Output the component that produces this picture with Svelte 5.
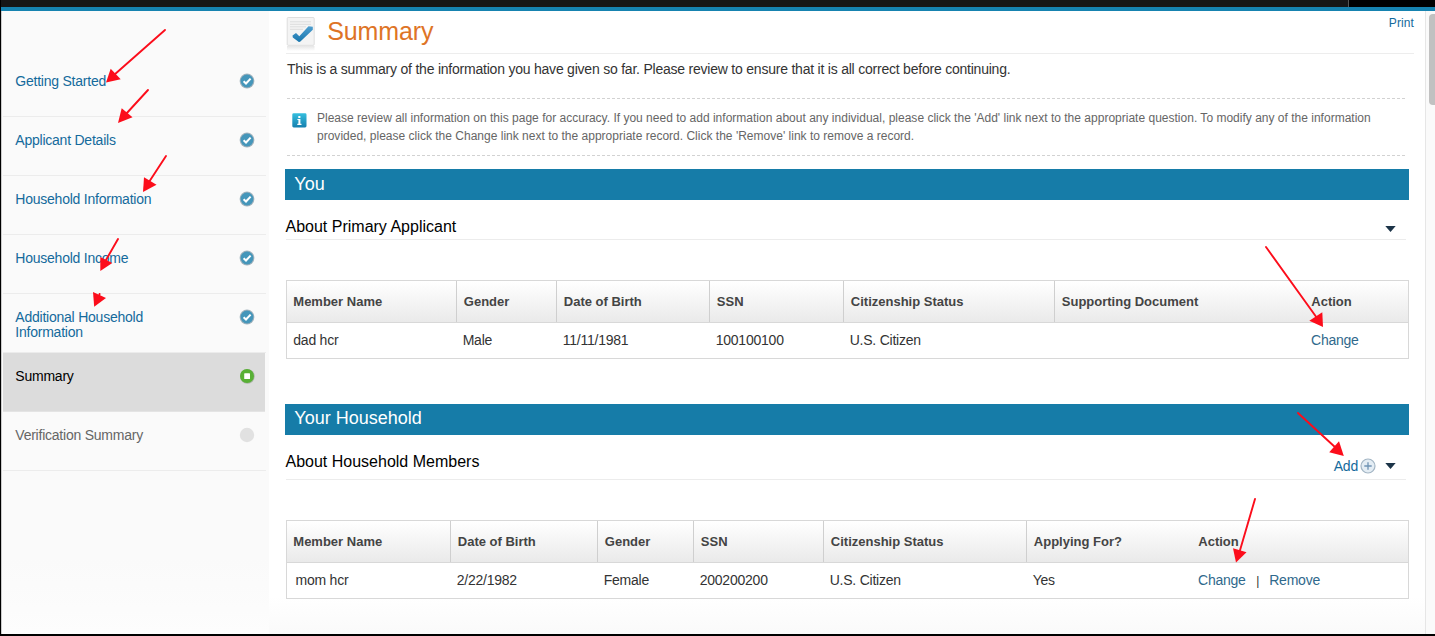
<script>
  const steps = [
    { label: 'Getting Started', state: 'done' },
    { label: 'Applicant Details', state: 'done' },
    { label: 'Household Information', state: 'done' },
    { label: 'Household Income', state: 'done' },
    { label: 'Additional Household Information', state: 'done' },
    { label: 'Summary', state: 'current' },
    { label: 'Verification Summary', state: 'pending' }
  ];

  const sections = [
    {
      title: 'You',
      heading: 'About Primary Applicant',
      canAdd: false,
      kind: 'applicant',
      columns: ['Member Name', 'Gender', 'Date of Birth', 'SSN', 'Citizenship Status', 'Supporting Document', 'Action'],
      row: ['dad hcr', 'Male', '11/11/1981', '100100100', 'U.S. Citizen', ''],
      actions: ['Change']
    },
    {
      title: 'Your Household',
      heading: 'About Household Members',
      canAdd: true,
      kind: 'members',
      columns: ['Member Name', 'Date of Birth', 'Gender', 'SSN', 'Citizenship Status', 'Applying For?', 'Action'],
      row: ['mom hcr', '2/22/1982', 'Female', '200200200', 'U.S. Citizen', 'Yes'],
      actions: ['Change', 'Remove']
    }
  ];

  const arrows = [
    { line: [165, 30, 114, 75], head: '106,82.5 110.7,68.7 120.7,79.3' },
    { line: [148, 90, 126, 114], head: '118,123 121.7,108.3 132.5,117.3' },
    { line: [166, 156, 149, 182], head: '143,192 144,177.3 156.5,184.8' },
    { line: [118, 239, 106, 260], head: '100.3,271 100.3,257 112.3,263' },
    { line: [99.6, 294, 99, 296], head: '94.2,306.8 93,292 106,298' },
    { line: [1266, 247, 1317, 318], head: '1323,327 1309.3,320.7 1322.3,312.3' },
    { line: [1298, 413, 1336, 448], head: '1343.8,456 1329.2,452.3 1339,441.2' },
    { line: [1255, 499, 1239.5, 552], head: '1236,562.5 1233,548.2 1246.5,552.3' }
  ];
</script>

<div class="page">
  <header class="topbar"><div class="topbar-end"></div></header>
  <div class="body">
    <nav class="sidebar">
      {#each steps as step}
        <a class="step {step.state}" href="#top">
          <span class="step-label">{step.label}</span>
          <svg class="step-icon" width="16" height="16" viewBox="0 0 16 16">
            {#if step.state === 'done'}
              <circle cx="8" cy="8" r="7.4" fill="#a3b3bd" />
              <circle cx="8" cy="8" r="6.4" fill="#4596ba" />
              <path d="M4.6 8.2 7 10.5 11.6 5.6" fill="none" stroke="#fff" stroke-width="2" />
            {:else if step.state === 'current'}
              <circle cx="8.4" cy="8.5" r="7.3" fill="#aab3a7" />
              <circle cx="8" cy="8" r="7" fill="#58b035" />
              <rect x="5.2" y="5.2" width="5.8" height="5.8" rx="0.6" fill="#fff" />
            {:else}
              <circle cx="8" cy="8" r="7.2" fill="#e1e1e1" />
            {/if}
          </svg>
        </a>
      {/each}
    </nav>

    <main class="content">
      <div class="title-row">
        <svg class="title-icon" width="30" height="36" viewBox="0 0 30 36">
          <defs>
            <linearGradient id="tick" x1="0" y1="0" x2="0" y2="1">
              <stop offset="0" stop-color="#4f9fd0" />
              <stop offset="1" stop-color="#1876ad" />
            </linearGradient>
            <linearGradient id="reflection" x1="0" y1="0" x2="0" y2="1">
              <stop offset="0" stop-color="#e6e6e6" />
              <stop offset="1" stop-color="#fff" />
            </linearGradient>
          </defs>
          <rect x="0" y="31" width="27.5" height="5" fill="url(#reflection)" />
          <rect x="0.2" y="2.5" width="27" height="27.8" rx="1" fill="#f4f4f4" stroke="#dedede" />
          <path d="M3 6.8H24M3 9.3H24M3 11.8H19M3 14.3H16" stroke="#dcdddd" stroke-width="1" />
          <path d="M5.5 20.5 9 18 12.3 21.2 21.5 11.3 25.8 11.8 25.8 14.8 13.4 26.6Q12.2 27.5 11.2 26.5L5.8 22.6Z" fill="url(#tick)" />
        </svg>
        <h1>Summary</h1>
        <a class="print" href="#top">Print</a>
      </div>

      <p class="intro">This is a summary of the information you have given so far. Please review to ensure that it is all correct before continuing.</p>

      <div class="notice">
        <svg class="info-icon" width="15" height="15" viewBox="0 0 15 15">
          <defs>
            <linearGradient id="info" x1="0" y1="0" x2="0" y2="1">
              <stop offset="0" stop-color="#35bfdf" />
              <stop offset="1" stop-color="#157fae" />
            </linearGradient>
          </defs>
          <rect x="0.3" y="0.3" width="14.2" height="14.2" rx="1.4" fill="url(#info)" />
          <path d="M6.3 3h2.1v1.9H6.3zM5.4 5.9h3v4.8h1.1v1.2H5.3v-1.2h1.1v-3.6h-1z" fill="#fff" />
        </svg>
        <p>
          <span class="line first">Please review all information on this page for accuracy. If you need to add information about any individual, please click the 'Add' link next to the appropriate question. To modify any of the information</span>
          <span class="line">provided, please click the Change link next to the appropriate record. Click the 'Remove' link to remove a record.</span>
        </p>
      </div>

      {#each sections as section}
        <section class={section.kind}>
          <h2>{section.title}</h2>
          <div class="subhead">
            <h3>{section.heading}</h3>
            <div class="tools">
              {#if section.canAdd}
                <a class="add" href="#top">Add</a>
                <svg class="plus" width="16" height="16" viewBox="0 0 16 16">
                  <circle cx="8" cy="8" r="7" fill="#e4edf4" stroke="#a3b5c4" stroke-width="1.2" />
                  <path d="M8 4.3V11.7M4.3 8H11.7" stroke="#6f93b4" stroke-width="1.3" />
                </svg>
              {/if}
              <svg class="caret" width="11" height="6" viewBox="0 0 11 6"><path d="M0.3 0H10.7L5.5 6Z" fill="#1c3448" /></svg>
            </div>
          </div>
          <div class="table">
            <div class="row head">
              {#each section.columns as column}
                <div class="cell">{column}</div>
              {/each}
            </div>
            <div class="row data">
              {#each section.row as value}
                <div class="cell">{value}</div>
              {/each}
              <div class="cell">
                {#each section.actions as action, i}
                  {#if i > 0}<span class="bar">|</span>{/if}
                  <a href="#top">{action}</a>
                {/each}
              </div>
            </div>
          </div>
        </section>
      {/each}
    </main>

    <div class="scrollbar"><div class="thumb"></div></div>
  </div>

  <svg class="arrows" width="1435" height="636" viewBox="0 0 1435 636">
    {#each arrows as a}
      <line x1={a.line[0]} y1={a.line[1]} x2={a.line[2]} y2={a.line[3]} />
      <polygon points={a.head} />
    {/each}
  </svg>
</div>

<style>
  :global(body) {
    margin: 0;
    overflow: hidden;
  }
  .page {
    position: relative;
    box-sizing: border-box;
    width: 1435px;
    height: 636px;
    overflow: hidden;
    display: flex;
    flex-direction: column;
    border-left: 1px solid #000;
    border-bottom: 2px solid #000;
    background: #fff;
    font-family: 'Liberation Sans', Arial, sans-serif;
    color: #333;
  }
  h1, h2, h3, p {
    margin: 0;
    font-weight: 400;
  }
  a {
    color: #146a9c;
    text-decoration: none;
  }
  .topbar {
    flex: none;
    display: flex;
    justify-content: flex-end;
    height: 7px;
    background: #161616;
    border-bottom: 4px solid #1683b0;
  }
  .topbar-end {
    width: 86px;
    background: #000;
    border-left: 1px solid #555;
  }
  .body {
    flex: 1;
    min-height: 0;
    display: flex;
  }
  .sidebar {
    box-sizing: border-box;
    width: 268px;
    padding: 47px 3px 0 1px;
    border-left: 1px solid #ccc;
    background: linear-gradient(#fafafa 88%, #fdfdfd);
  }
  .step {
    box-sizing: border-box;
    display: flex;
    justify-content: space-between;
    height: 59px;
    padding: 16px 11px 0 12.3px;
    border-bottom: 1px solid #ececec;
    font-size: 14px;
    letter-spacing: -0.23px;
    line-height: 15px;
  }
  .step-label {
    width: 150px;
  }
  .step-icon {
    margin-top: -0.6px;
  }
  .step.current {
    margin-right: 1px;
    padding-right: 10px;
    background: #dcdcdc;
    border-color: #e4e4e4;
    color: #000;
  }
  .step.pending {
    color: #666;
  }
  .content {
    flex: 1;
    min-width: 0;
    padding: 4px 11px 0 16px;
    background: linear-gradient(#fff 94%, #fafafa);
  }
  .title-row {
    box-sizing: border-box;
    display: flex;
    height: 39px;
    margin-left: 1px;
    border-bottom: 1px solid #ededed;
  }
  .title-icon {
    overflow: visible;
    padding-left: 1px;
  }
  h1 {
    flex: 1;
    margin-left: 10.2px;
    font-size: 25px;
    letter-spacing: -0.12px;
    line-height: 32px;
    color: #de7426;
  }
  .print {
    margin-top: 1px;
    font-size: 12px;
    line-height: 15px;
    letter-spacing: 0.1px;
  }
  .intro {
    margin-left: 2px;
    padding-top: 7px;
    font-size: 14px;
    letter-spacing: -0.22px;
    line-height: 16px;
    white-space: nowrap;
  }
  .notice {
    box-sizing: border-box;
    display: flex;
    gap: 10px;
    width: 1118px;
    height: 59px;
    margin: 21px 0 12px 2px;
    padding: 11px 0 0 5px;
    background:
      repeating-linear-gradient(90deg, #d2d2d2 0 3px, transparent 3px 5px) 0 0 / 100% 1px no-repeat,
      repeating-linear-gradient(90deg, #d2d2d2 0 3px, transparent 3px 5px) 0 calc(100% - 1px) / 100% 1px no-repeat;
    font-size: 12px;
    line-height: 18px;
    letter-spacing: 0.008px;
    color: #666;
  }
  .info-icon {
    flex: none;
    margin-top: 4px;
  }
  .line {
    display: block;
    white-space: nowrap;
  }
  h2 {
    box-sizing: border-box;
    width: 1124px;
    height: 31px;
    padding-left: 9.3px;
    background: #167ca8;
    color: #fff;
    font-size: 18px;
    line-height: 30px;
  }
  .members h2 {
    line-height: 29px;
  }
  .subhead {
    box-sizing: border-box;
    display: flex;
    justify-content: space-between;
    width: 1120px;
    height: 40px;
    margin-left: 0.5px;
    padding-top: 17px;
    border-bottom: 1px solid #ececec;
  }
  .members .subhead {
    height: 45px;
  }
  h3 {
    font-size: 16px;
    line-height: 20px;
    color: #000;
  }
  .tools {
    display: flex;
    align-items: center;
    height: 24px;
    padding-right: 9.5px;
    font-size: 14px;
    letter-spacing: -0.23px;
  }
  .members .tools {
    height: 28px;
  }
  .plus {
    margin: 0 9px 0 2px;
  }
  .table {
    box-sizing: border-box;
    width: 1123px;
    margin: 40px 0 45px 1px;
    border: 1px solid #d8d8d8;
    background: #fff;
  }
  .row {
    display: grid;
  }
  .applicant .row {
    grid-template-columns: 170px 100px 153px 134px 211px 249px 1fr;
  }
  .members .row {
    grid-template-columns: 164px 147px 96px 130px 203px 164px 1fr;
  }
  .cell {
    box-sizing: border-box;
    padding-left: 5.7px;
    font-size: 14px;
    letter-spacing: -0.23px;
    white-space: nowrap;
  }
  .head {
    height: 41px;
    border-bottom: 1px solid #d8d8d8;
    background: linear-gradient(#fff, #eaeaea);
  }
  .head .cell {
    padding-left: 6.8px;
    border-right: 1px solid #cfcfcf;
    font-size: 13px;
    letter-spacing: 0;
    font-weight: 700;
    line-height: 41px;
    color: #444;
  }
  .head .cell:first-child {
    padding-left: 6.3px;
  }
  .head .cell:nth-child(n + 6) {
    border-right: 0;
  }
  .head .cell:last-child {
    padding-left: 7.3px;
  }
  .data {
    height: 35px;
  }
  .data .cell {
    line-height: 35px;
  }
  .data .cell:first-child {
    padding-left: 6.3px;
  }
  .data .cell:last-child {
    padding-left: 7px;
  }
  .members .data .cell:first-child {
    padding-left: 8.5px;
  }
  .data a {
    color: #30698c;
  }
  .bar {
    margin: 0 6.5px 0 10.5px;
    font-size: 12px;
  }
  .scrollbar {
    box-sizing: border-box;
    width: 10px;
    padding: 3px 0 0 3px;
    border-left: 1px solid #e6e6e6;
    background: #fafafa;
  }
  .thumb {
    height: 91px;
    border-radius: 4px 0 0 4px;
    background: #c1c1c1;
  }
  .arrows {
    position: absolute;
    left: -1px;
    top: 0;
    pointer-events: none;
  }
  .arrows line {
    stroke: #fc0d1b;
    stroke-width: 1.9;
    stroke-linecap: round;
  }
  .arrows polygon {
    fill: #fc0d1b;
  }
</style>
